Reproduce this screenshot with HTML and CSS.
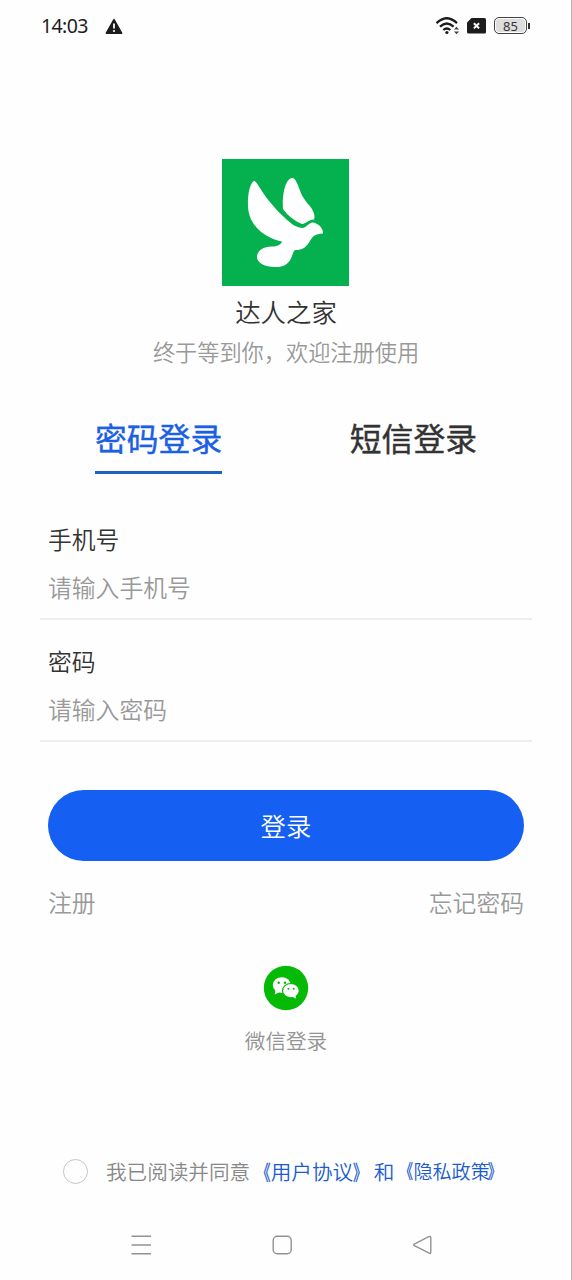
FILE: index.html
```html
<!DOCTYPE html>
<html lang="zh-CN">
<head>
<meta charset="utf-8">
<title>登录</title>
<link rel="stylesheet" href="styles.css">
</head>
<body>
<div class="screen">
  <header class="status">
    <span class="time">14:03</span>
    <svg class="warn" width="18" height="17" viewBox="0 0 18 17"><path d="M9 1.6 16.6 15.2H1.4Z" fill="#1c1c1c" stroke="#1c1c1c" stroke-width="1.6" stroke-linejoin="round"/><path d="M9 5.6v5" stroke="#fff" stroke-width="1.8"/><circle cx="9" cy="13" r="1.1" fill="#fff"/></svg>
    <div class="status-icons">
      <svg width="24" height="18" viewBox="0 0 24 18" fill="none" stroke="#1c1c1c" stroke-width="2.3"><path d="M0.500 6.200Q10.700-3.800 21 6.200"/><path d="M4 9.700Q10.800 3.300 17.600 9.700"/><path d="M7.300 13Q10.800 9.900 14.300 13"/><circle cx="10.900" cy="15.500" r="1.600" fill="#1c1c1c" stroke="none"/><path d="m18 12.600 2.500-2.800 2.500 2.800ZM18 14.400l2.500 2.800 2.500-2.800Z" fill="#444" stroke="none"/></svg>
      <svg width="19" height="16" viewBox="0 0 19 16"><path d="M4.500 0H17.500Q19 0 19 1.500V14Q19 15.500 17.500 15.500H1.500Q0 15.500 0 14V4.500Z" fill="#1c1c1c"/><path d="m6.900 5.200 5.200 5.200m0-5.200-5.200 5.200" stroke="#fff" stroke-width="2"/></svg>
      <div class="battery"><span class="level">85</span></div>
    </div>
  </header>

  <main class="content">
    <svg class="logo" width="127" height="127" viewBox="0 0 127 127"><path fill="#05b14e" d="M0 0h127v127H0z"/><path fill="#fff" d="M32 22C28 24 25.500 35 26 47C26.500 62 36 73 49 79C53 81 57 82 60 82.500C59 86 55 87.500 50 87.500C41 87.500 35 92 35 98C35 104 43 108 53 108C62 108.500 67 105 70 97C72 92 71.500 91 75 91C81 91 85 87 88 82C91 77 93 75 101 74.500C101.500 70 97 64.500 91 63.500C86 64 85 68.500 80 69C73 68 68 64 62 58C51 48 42 36 36 26C34 23 33 22 32 22ZM70 19C63 20 60 37 61 50C66 57 73 62 80 65C84 65 85 61 92 60.500C94 56 90 49 86 45C79 37 78 31 75 24C73 20 72 19 70 19Z"/></svg>
    <h1 class="name">达人之家</h1>
    <p class="slogan">终于等到你，欢迎注册使用</p>

    <nav class="tabs">
      <a class="tab active">密码登录</a>
      <a class="tab">短信登录</a>
    </nav>

    <section class="field">
      <div class="label">手机号</div>
      <div class="placeholder">请输入手机号</div>
    </section>
    <section class="field">
      <div class="label">密码</div>
      <div class="placeholder">请输入密码</div>
    </section>

    <div class="submit">登录</div>
    <div class="links"><span>注册</span><span>忘记密码</span></div>

    <div class="wechat">
      <svg width="46" height="46" viewBox="0 0 46 46"><circle cx="23" cy="23" r="22.200" fill="#04ba05"/><ellipse cx="18.800" cy="20.100" rx="9" ry="7.800" fill="#fff"/><path d="m12.500 25-.8 4.500 5-2.500Z" fill="#fff"/><ellipse cx="27.900" cy="25.700" rx="8.400" ry="7.200" fill="#fff" stroke="#04ba05" stroke-width="1.200"/><path d="m29 31.500 4.200 2.300-.8-3.800Z" fill="#fff"/><g fill="#04ba05"><circle cx="15.700" cy="17.800" r="1.200"/><circle cx="22" cy="17.800" r="1.200"/><circle cx="25.400" cy="23.700" r="1"/><circle cx="30.700" cy="23.700" r="1"/></g></svg>
      <span>微信登录</span>
    </div>

    <div class="agreement">
      <span class="radio"></span>
      <span>我已阅读并同意</span><span class="blue"><span class="open">《</span>用户协议<span class="close">》</span>和</span><span class="blue policy"><span class="open">《</span>隐私政策<span class="close">》</span></span>
    </div>
  </main>

  <footer class="navbar">
    <svg width="22" height="22" viewBox="0 0 22 22" stroke="#929292" stroke-width="1.400"><path d="M1.500 2.200h19.500M1.500 11h19.500M1.500 19.700h19.500"/></svg>
    <svg width="22" height="22" viewBox="0 0 22 22" fill="none" stroke="#929292" stroke-width="1.400"><rect x="2.200" y="2.200" width="18" height="17.600" rx="4"/></svg>
    <svg width="22" height="22" viewBox="0 0 22 22" fill="none" stroke="#929292" stroke-width="1.400"><path d="M3.300 10.200 18.200 2.500Q19.800 2 19.800 3.500V18.200Q19.800 20 18.200 19.200L3.300 11.700Q2 11 3.300 10.200Z"/></svg>
  </footer>
</div>
</body>
</html>
```
FILE: styles.css
```css
* { box-sizing: border-box; }
body {
  margin: 0;
  background: #fff;
  color: #333;
  font-family: "Noto Sans CJK SC", sans-serif;
}
.screen {
  width: 572px;
  height: 1280px;
  display: flex;
  flex-direction: column;
  border-right: 1px solid #b5b5b5;
  background: #fefefe;
}
.status {
  height: 52px;
  padding: 0 41px;
  display: flex;
  align-items: center;
}
.time {
  width: 64px;
  font: 400 19.500px/24px "Noto Sans", sans-serif;
  letter-spacing: -0.600px;
  color: #1c1c1c;
}
.status-icons {
  margin-left: auto;
  margin-top: -1px;
  display: flex;
  align-items: center;
  gap: 7px;
}
.battery {
  width: 36px;
  height: 17px;
  margin-left: 1px;
  display: flex;
  align-items: center;
}
.level {
  width: 33px;
  height: 17px;
  border: 1px solid #444;
  border-radius: 5px;
  background: #dedede;
  box-shadow: inset 0 0 0 1px #fff;
  text-align: center;
  font: 13px/16px "Noto Sans", sans-serif;
  color: #333;
}
.battery::after {
  content: "";
  width: 2px;
  height: 6px;
  margin-left: 1px;
  background: #333;
}
.content {
  height: 1158px;
  padding: 107px 39px 0 40px;
  display: flex;
  flex-direction: column;
  align-items: stretch;
}
.logo { display: block; align-self: center; margin-right: 1px; }
.name {
  margin: 5px 0 0;
  text-align: center;
  font-size: 25.400px;
  line-height: 40px;
  font-weight: 350;
}
.slogan {
  margin: 0;
  text-align: center;
  font-size: 22.200px;
  line-height: 40px;
  font-weight: 350;
  color: #999;
}
.tabs {
  margin-top: 40px;
  display: flex;
  justify-content: space-between;
  padding: 0 55px;
}
.tab {
  height: 63px;
  font-size: 31.800px;
  line-height: 52px;
  font-weight: 400;
  -webkit-text-stroke: 0.400px currentColor;
  border-bottom: 3px solid transparent;
}
.active { color: #1b5fe3; border-color: #205fc4; }
.field {
  height: 122px;
  padding: 20px 8px 0;
  border-bottom: 2px solid #eee;
  font-size: 23.800px;
  font-weight: 350;
}
.tabs + .field { margin-top: 24px; }
.label { line-height: 41px; }
.placeholder { line-height: 42px; margin-top: 7px; color: #999; }
.submit {
  height: 71px;
  margin: 48px 8px 0;
  border-radius: 36px;
  background: #155ff3;
  color: #fff;
  text-align: center;
  font-size: 25.400px;
  line-height: 71px;
  font-weight: 350;
}
.links {
  margin-top: 21px;
  padding: 0 8px;
  display: flex;
  justify-content: space-between;
  font-size: 23.800px;
  line-height: 40px;
  font-weight: 350;
  color: #999;
}
.wechat {
  margin-top: 43px;
  display: flex;
  flex-direction: column;
  align-items: center;
  font-size: 20.600px;
  line-height: 30px;
  font-weight: 350;
  color: #939393;
}
.wechat span { margin-top: 14px; }
.agreement {
  margin-top: 101px;
  padding-left: 23px;
  display: flex;
  align-items: center;
  white-space: nowrap;
  font-size: 20.600px;
  line-height: 30px;
  font-weight: 350;
  color: #888;
}
.radio {
  width: 25px;
  height: 25px;
  margin-right: 18px;
  border: 1.500px solid #c5c5c5;
  border-radius: 50%;
}
.blue { color: #1b5bce; }
.policy { font-size: 19.100px; }
.open, .close {
  display: inline-block;
  transform: scaleX(.68);
  -webkit-text-stroke: 0.400px currentColor;
}
.open { transform-origin: right; }
.close { transform-origin: left; }
.policy .close { transform: translateX(-2px) scaleX(.68); }
.navbar {
  height: 70px;
  padding: 0 138px 0 130px;
  display: flex;
  align-items: center;
  justify-content: space-between;
}
```
